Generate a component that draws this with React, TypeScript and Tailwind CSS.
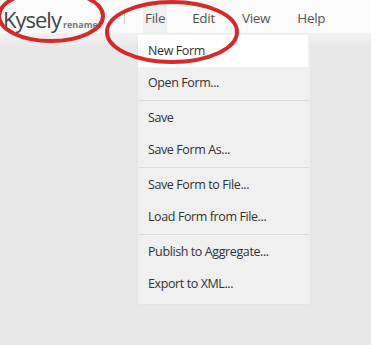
const MENU = ['File', 'Edit', 'View', 'Help']

const FILE_ITEMS: (string | null)[] = [
  'New Form',
  'Open Form...',
  null,
  'Save',
  'Save Form As...',
  null,
  'Save Form to File...',
  'Load Form from File...',
  null,
  'Publish to Aggregate...',
  'Export to XML...',
]

export default function App() {
  return (
    <div
      className="relative w-[371px] h-[345px] overflow-hidden bg-[#e8e8e8] text-[#333]"
      style={{ fontFamily: '"Open Sans", "Noto Sans", sans-serif' }}
    >
      <header className="h-[33px] bg-[#fbfbfb] flex items-center">
        <div className="flex items-baseline pl-[3px] w-[120px] pt-[6px]">
          <span className="text-[22px] leading-none tracking-[-1px] text-[#444]">Kysely</span>
          <span className="ml-[2px] text-[9px] font-bold text-[#777]">rename</span>
        </div>
        <div className="w-px h-[14px] bg-[#ccc] ml-[4px]" />
        <nav className="flex h-full ml-[18px]">
          {MENU.map((m) => (
            <div
              key={m}
              className={`h-full flex items-center pt-[4px] px-[2px] mr-[23px] text-[13.5px] tracking-[-0.3px] text-[#555] ${
                m === 'File' ? 'bg-[#f0f0f0]' : ''
              }`}
            >
              {m}
            </div>
          ))}
        </nav>
      </header>
      <div className="h-[12px] bg-gradient-to-b from-[#f2f2f2] to-[#ebebeb]" />

      <div className="absolute left-[138px] top-[33px] w-[172px] bg-[#f0f0f0] pb-[4px] shadow-[0_0_2px_rgba(0,0,0,0.05)]">
        {FILE_ITEMS.map((item, i) =>
          item === null ? (
            <div key={i} className="mx-[1px] h-px bg-[#dcdcdc] my-px" />
          ) : (
            <div
              key={i}
              className={`h-[32px] flex items-center pl-[10px] text-[12.5px] tracking-[-0.4px] text-[#333] ${
                i === 0 ? 'bg-white mr-[2px] mt-[2px] h-[30px]' : ''
              }`}
            >
              {item}
            </div>
          )
        )}
      </div>

      <svg className="absolute inset-0 pointer-events-none" width="371" height="345">
        <ellipse cx="51" cy="16" rx="52" ry="25" fill="none" stroke="#d42a2a" strokeWidth="4" />
        <ellipse cx="172" cy="32" rx="65" ry="30" fill="none" stroke="#d42a2a" strokeWidth="4" />
      </svg>
    </div>
  )
}
